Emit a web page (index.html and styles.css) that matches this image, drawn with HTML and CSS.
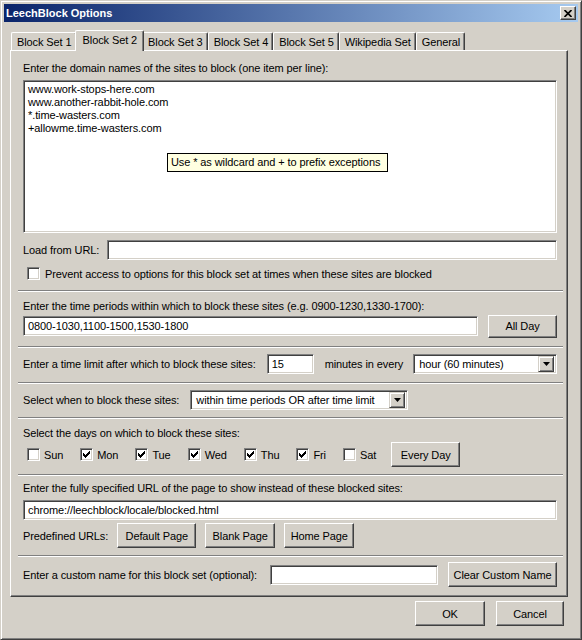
FILE: index.html
```html
<!DOCTYPE html>
<html lang="en">
    <head>
        <meta charset="UTF-8">
        <title>LeechBlock Options</title>
        <link rel="stylesheet" href="styles.css">
    </head>
    <body>
        <div class="dialog">
            <div class="titleBar">
                <span class="titleText">LeechBlock Options</span>
                <button class="closeButton" title="Close">
                    <svg width="8" height="7" viewBox="0 0 8 7"><path d="M0.5 0 L7.5 7 M7.5 0 L0.5 7" stroke="#000" stroke-width="1.7"/></svg>
                </button>
            </div>

            <!-- block set tabs -->
            <div class="tabs">
                <div class="tab">Block Set 1</div>
                <div class="tab selected">Block Set 2</div>
                <div class="tab">Block Set 3</div>
                <div class="tab">Block Set 4</div>
                <div class="tab">Block Set 5</div>
                <div class="tab">Wikipedia Set</div>
                <div class="tab">General</div>
            </div>

            <div class="panel">
                <section class="group sites">
                    <p class="caption">Enter the domain names of the sites to block (one item per line):</p>
                    <div class="siteBox">
                        <textarea class="siteList">www.work-stops-here.com
www.another-rabbit-hole.com
*.time-wasters.com
+allowme.time-wasters.com</textarea>
                        <div class="tooltip">Use * as wildcard and + to prefix exceptions</div>
                    </div>
                    <div class="row loadRow">
                        <span class="rowLabel">Load from URL:</span>
                        <input type="text" class="field loadUrl">
                    </div>
                    <label class="check lockOption"><span class="box"></span>Prevent access to options for this block set at times when these sites are blocked</label>
                </section>
                <hr class="sep">

                <section class="group periods">
                    <p class="caption">Enter the time periods within which to block these sites (e.g. 0900-1230,1330-1700):</p>
                    <div class="row">
                        <input type="text" class="field periodField" value="0800-1030,1100-1500,1530-1800">
                        <button class="btn allDay">All Day</button>
                    </div>
                </section>
                <hr class="sep">

                <section class="group limit">
                    <div class="row">
                        <span class="rowLabel">Enter a time limit after which to block these sites:</span>
                        <input type="text" class="field limitField" value="15">
                        <span class="rowLabel">minutes in every</span>
                        <div class="combo limitPeriod">
                            <span class="comboValue">hour (60 minutes)</span>
                            <span class="dropButton"><svg width="7" height="4" viewBox="0 0 7 4"><path d="M0 0h7L3.5 4z" fill="#000"/></svg></span>
                        </div>
                    </div>
                </section>
                <hr class="sep">

                <section class="group condition">
                    <div class="row">
                        <span class="rowLabel">Select when to block these sites:</span>
                        <div class="combo conditionCombo">
                            <span class="comboValue">within time periods OR after time limit</span>
                            <span class="dropButton"><svg width="7" height="4" viewBox="0 0 7 4"><path d="M0 0h7L3.5 4z" fill="#000"/></svg></span>
                        </div>
                    </div>
                </section>
                <hr class="sep">

                <section class="group days">
                    <p class="caption">Select the days on which to block these sites:</p>
                    <div class="row dayRow">
                        <label class="check"><span class="box"></span>Sun</label>
                        <label class="check"><span class="box checked"></span>Mon</label>
                        <label class="check"><span class="box checked"></span>Tue</label>
                        <label class="check"><span class="box checked"></span>Wed</label>
                        <label class="check"><span class="box checked"></span>Thu</label>
                        <label class="check"><span class="box checked"></span>Fri</label>
                        <label class="check"><span class="box"></span>Sat</label>
                        <button class="btn everyDay">Every Day</button>
                    </div>
                </section>
                <hr class="sep">

                <section class="group blockPage">
                    <p class="caption">Enter the fully specified URL of the page to show instead of these blocked sites:</p>
                    <input type="text" class="field pageUrl" value="chrome://leechblock/locale/blocked.html">
                    <div class="row presetRow">
                        <span class="rowLabel">Predefined URLs:</span>
                        <button class="btn preset">Default Page</button>
                        <button class="btn preset">Blank Page</button>
                        <button class="btn preset">Home Page</button>
                    </div>
                </section>
                <hr class="sep">

                <section class="group customName">
                    <div class="row">
                        <span class="rowLabel">Enter a custom name for this block set (optional):</span>
                        <input type="text" class="field nameField">
                        <button class="btn clearName">Clear Custom Name</button>
                    </div>
                </section>
            </div>

            <div class="actions">
                <button class="btn okButton">OK</button>
                <button class="btn cancelButton">Cancel</button>
            </div>
        </div>
    </body>
</html>
```

FILE: styles.css
```css
* {
    box-sizing: border-box;
}

body {
    margin: 0px;
    padding: 0px;
    width: 582px;
    height: 640px;
    overflow: hidden;
    background-color: #d4d0c8;
    font-family: "Liberation Sans", Arial, sans-serif;
    font-size: 11px;
    letter-spacing: -0.1px;
    color: #000;
}

/* window frame, classic 3d border */
.dialog {
    height: 640px;
    padding: 3px;
    border: 1px solid;
    border-color: #d4d0c8 #404040 #404040 #d4d0c8;
    box-shadow: inset 1px 1px #fff, inset -1px -1px #808080;
    display: flex;
    flex-direction: column;
}

.titleBar {
    height: 18px;
    flex: none;
    display: flex;
    align-items: center;
    justify-content: space-between;
    padding: 0 2px 0 2px;
    background: linear-gradient(to right, #0a246a, #a6caf0);
}

.titleText {
    color: #fff;
    font-weight: bold;
    font-size: 11px;
    letter-spacing: 0;
}

.closeButton {
    width: 16px;
    height: 14px;
    padding: 0;
    margin: 0;
    display: flex;
    align-items: center;
    justify-content: center;
    background-color: #d4d0c8;
    border: 1px solid;
    border-color: #fff #404040 #404040 #fff;
    box-shadow: inset -1px -1px #808080;
}

/* tabs */
.tabs {
    display: flex;
    align-items: flex-end;
    height: 20px;
    margin: 8px 10px 0 6px;
    padding-left: 1px;
    flex: none;
}

.tab {
    height: 18px;
    padding: 0 4px 0 5px;
    line-height: 18px;
    white-space: nowrap;
    border-top: 1px solid #fff;
    border-left: 1px solid #fff;
    border-right: 1px solid #404040;
    box-shadow: inset -1px 0 #808080;
    border-radius: 2px 2px 0 0;
}

.tab.selected {
    position: relative;
    z-index: 1;
    height: 21px;
    margin: 0 -2px -1px -2px;
    padding: 0 6px 0 7px;
    line-height: 18px;
    background-color: #d4d0c8;
}

.panel {
    flex: none;
    margin: 0 10px 0 6px;
    border: 1px solid;
    border-color: #fff #404040 #404040 #fff;
    box-shadow: inset -1px -1px #808080;
    padding: 0 4px 1px 7px;
}

.group {
    display: flex;
    flex-direction: column;
    padding: 0 6px 0 5px;
}

.sep {
    margin: 0;
    height: 2px;
    border: none;
    border-top: 1px solid #808080;
    border-bottom: 1px solid #fff;
}

.caption {
    margin: 0;
    line-height: 13px;
    white-space: nowrap;
}

.row {
    display: flex;
    align-items: center;
}

.rowLabel {
    white-space: nowrap;
}

/* sunken text fields */
.field,
.siteList,
.combo {
    height: 20px;
    margin: 0;
    padding: 0 4px;
    font-family: inherit;
    font-size: 11px;
    letter-spacing: inherit;
    color: #000;
    background-color: #fff;
    border: 1px solid;
    border-color: #808080 #fff #fff #808080;
    box-shadow: inset 1px 1px #404040, inset -1px -1px #d4d0c8;
    outline: none;
}

.btn {
    height: 25px;
    margin: 0;
    padding: 0 4px;
    font-family: inherit;
    font-size: 11px;
    letter-spacing: inherit;
    color: #000;
    background-color: #d4d0c8;
    border: 1px solid;
    border-color: #fff #404040 #404040 #fff;
    box-shadow: inset -1px -1px #808080;
    white-space: nowrap;
}

.check {
    display: flex;
    align-items: center;
    white-space: nowrap;
}

.box {
    width: 13px;
    height: 13px;
    margin-right: 5px;
    flex: none;
    background-color: #fff;
    border: 1px solid;
    border-color: #808080 #fff #fff #808080;
    box-shadow: inset 1px 1px #404040, inset -1px -1px #d4d0c8;
    display: flex;
    align-items: center;
    justify-content: center;
}

.box.checked::after {
    content: "";
    width: 7px;
    height: 7px;
    background: url("data:image/svg+xml;utf8,<svg xmlns='http://www.w3.org/2000/svg' width='7' height='7' viewBox='0 0 7 7'><path d='M0 2h1v1h1v1h1V3h1V2h1V1h1V0h1v3H6v1H5v1H4v1H3v1H2V6H1V5H0z' fill='black'/></svg>") no-repeat;
}

/* dropdown lists */
.combo {
    display: flex;
    align-items: center;
    justify-content: space-between;
    padding: 0 2px 0 5px;
}

.dropButton {
    width: 16px;
    height: 16px;
    display: flex;
    align-items: center;
    justify-content: center;
    background-color: #d4d0c8;
    border: 1px solid;
    border-color: #d4d0c8 #404040 #404040 #d4d0c8;
    box-shadow: inset 1px 1px #fff, inset -1px -1px #808080;
}

/* sites group */
.sites {
    padding-top: 11px;
    padding-bottom: 10px;
}

.siteBox {
    position: relative;
    margin-top: 5px;
}

.siteList {
    display: block;
    width: 100%;
    height: 153px;
    padding: 2px 4px;
    line-height: 13px;
    resize: none;
    overflow: hidden;
}

.tooltip {
    position: absolute;
    left: 144px;
    top: 73px;
    width: 221px;
    height: 19px;
    padding: 0 3px;
    line-height: 17px;
    white-space: nowrap;
    background-color: #ffffe1;
    border: 1px solid #000;
}

.loadRow {
    margin-top: 7px;
}

.loadUrl {
    flex: 1;
    margin-left: 8px;
}

.lockOption {
    margin-top: 7px;
    margin-left: 4px;
    height: 13px;
}

/* time periods */
.periods {
    padding-top: 8px;
    padding-bottom: 9px;
}

.periods .row {
    margin-top: 2px;
    height: 22px;
}

.periodField {
    flex: 1;
}

.allDay {
    height: 23px;
    width: 69px;
    margin-left: 10px;
}

/* time limit */
.limit {
    padding-top: 6px;
    padding-bottom: 8px;
}

.limitField {
    width: 47px;
    margin: 0 11px 0 11px;
}

.limitPeriod {
    flex: 1;
    margin-left: 10px;
}

.condition {
    padding-top: 6px;
    padding-bottom: 7px;
}

.conditionCombo {
    width: 218px;
    margin-left: 11px;
}

/* days of the week */
.days {
    padding-top: 8px;
    padding-bottom: 7px;
}

.dayRow {
    margin-top: 2px;
    padding-left: 4px;
    gap: 17px;
}

.dayRow .box {
    margin-right: 4px;
}

.everyDay {
    width: 69px;
    margin-left: -2px;
}

/* blocking page */
.blockPage {
    padding-top: 6px;
    padding-bottom: 7px;
}

.pageUrl {
    margin-top: 5px;
    width: 100%;
}

.presetRow {
    margin-top: 3px;
    gap: 9px;
}

.preset {
    width: 70px;
}

.presetRow .preset:first-of-type {
    width: 79px;
}

.customName {
    padding-top: 5px;
    padding-bottom: 8px;
}

.nameField {
    width: 168px;
    margin-left: 13px;
}

.clearName {
    width: 109px;
    margin-left: 10px;
}

/* dialog buttons */
.actions {
    display: flex;
    justify-content: flex-end;
    gap: 11px;
    margin-top: 4px;
    padding-right: 14px;
}

.okButton {
    width: 70px;
}

.cancelButton {
    width: 68px;
}
```
